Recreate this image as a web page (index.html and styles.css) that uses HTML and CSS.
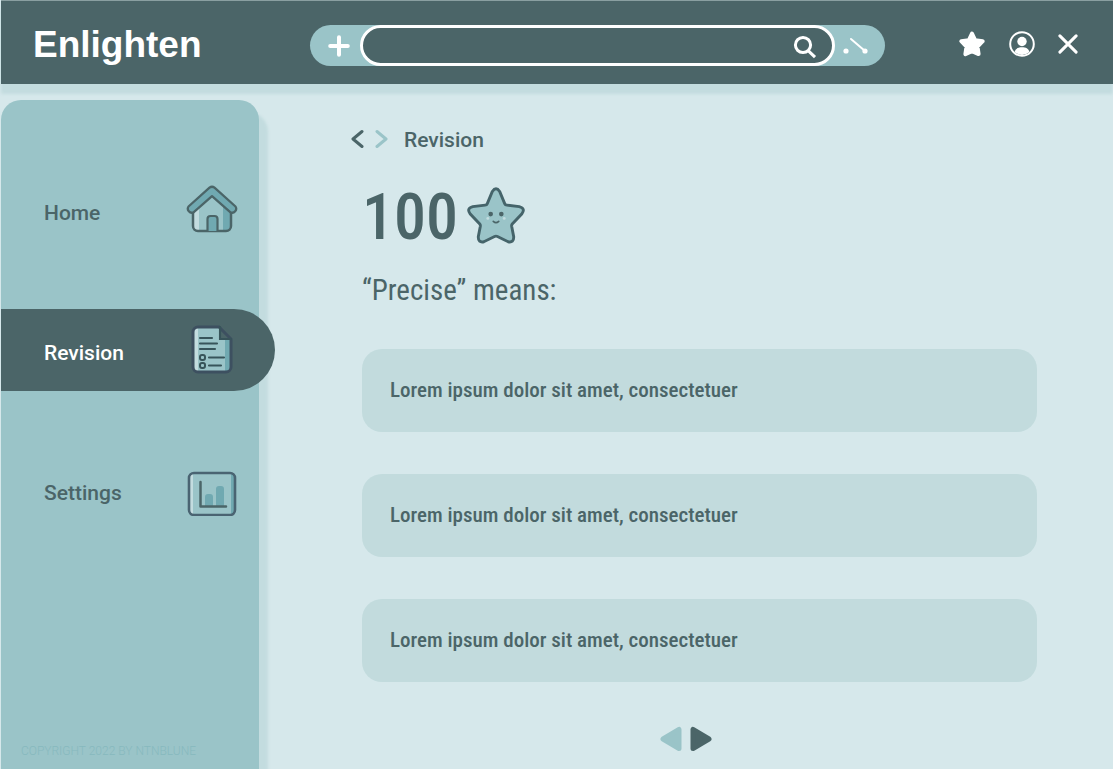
FILE: index.html
```html
<!DOCTYPE html>
<html lang="en">
<head>
<meta charset="utf-8">
<meta name="viewport" content="width=device-width, initial-scale=1">
<title>Enlighten</title>
<link rel="stylesheet" href="styles.css">
</head>
<body>
<header class="topbar">
  <a class="logo" href="#">Enlighten</a>
  <form class="search" role="search">
    <button class="search-side" type="button" aria-label="Add">
      <svg width="22" height="22" viewBox="0 0 22 22"><path d="M11 2.2v17.6M2.2 11h17.6" stroke="#fff" stroke-width="4" stroke-linecap="round"/></svg>
    </button>
    <div class="search-field">
      <input class="search-input" type="search" aria-label="Search">
      <button class="icon-button" type="submit" aria-label="Submit search">
        <svg width="24" height="24" viewBox="0 0 24 24" fill="none" stroke="#fff" stroke-width="3"><circle cx="10" cy="10" r="7.6"/><path d="M15.4 15.8l6.6 6.4"/></svg>
      </button>
    </div>
    <button class="search-side" type="button" aria-label="Tools">
      <svg width="26" height="18" viewBox="0 0 26 18"><circle cx="3" cy="14" r="2.6" fill="#fff"/><circle cx="22" cy="14" r="2.6" fill="#fff"/><path d="M8 2l14 12" stroke="#fff" stroke-width="2" stroke-linecap="round"/></svg>
    </button>
  </form>
  <div class="actions">
    <button class="icon-button" type="button" aria-label="Favourites">
      <svg width="28" height="28" viewBox="0 0 28 28"><path d="M14 3.500l3.200 6.800 7.500.9-5.200 5.300 1.100 7.600L14 21.200l-6.600 2.900 1.100-7.600-5.200-5.300 7.500-.9z" fill="#fff" stroke="#fff" stroke-width="4" stroke-linejoin="round"/></svg>
    </button>
    <button class="icon-button" type="button" aria-label="Account">
      <svg width="26" height="26" viewBox="0 0 26 26"><circle cx="13" cy="13" r="11.800" fill="none" stroke="#fff" stroke-width="2"/><circle cx="13" cy="10.500" r="4.700" fill="#fff"/><path d="M5.600 21c.8-3.400 3.600-4.700 7.400-4.700s6.600 1.300 7.400 4.700A12 12 0 0 1 13 24a12 12 0 0 1-7.400-3z" fill="#fff"/></svg>
    </button>
    <button class="icon-button" type="button" aria-label="Close">
      <svg width="20" height="20" viewBox="0 0 20 20"><path d="M1.900 1.900l16.200 16.200M18.100 1.900L1.900 18.100" stroke="#fff" stroke-width="3" stroke-linecap="round"/></svg>
    </button>
  </div>
</header>

<div class="layout">
  <aside class="sidebar">
    <nav class="menu" aria-label="Main">
      <a class="menu-item" href="#"><span class="menu-label">Home</span>
        <svg width="52" height="52" viewBox="0 0 52 52">
          <path d="M7 22L26 7l19 15v20a5 5 0 0 1-5 5H12a5 5 0 0 1-5-5z" fill="#9ac4c8"/>
          <path d="M7 23l6-5v29h-1a5 5 0 0 1-5-5z" fill="#c3dcdf"/>
          <path d="M37 17l8 6v19a5 5 0 0 1-5 5h-3z" fill="#70a9b1"/>
          <path d="M7 25v17a5 5 0 0 0 5 5h28a5 5 0 0 0 5-5V25" fill="none" stroke="#4b6568" stroke-width="2.500"/>
          <path d="M21.500 47V35a3 3 0 0 1 3-3h4a3 3 0 0 1 3 3v12" fill="#70a9b1" stroke="#4b6568" stroke-width="2.200"/>
          <path d="M23.500 3.700a4 4 0 0 1 5 0L49.500 22.500a4 4 0 0 1-5 5.800L26 12.200 7.500 28.300a4 4 0 0 1-5-5.800z" fill="#70a9b1" stroke="#4b6568" stroke-width="2.300" stroke-linejoin="round"/>
        </svg>
      </a>
      <a class="menu-item menu-item-active" href="#" aria-current="page"><span class="menu-label">Revision</span>
        <svg width="52" height="52" viewBox="0 0 52 52">
          <path d="M12 3h21l12 12v28a5 5 0 0 1-5 5H12a5 5 0 0 1-5-5V8a5 5 0 0 1 5-5z" fill="#9ac4c8"/>
          <path d="M12 3v45a5 5 0 0 1-5-5V8a5 5 0 0 1 5-5z" fill="#c3dcdf"/>
          <path d="M39 14h6v29a5 5 0 0 1-5 5h-1z" fill="#70a9b1"/>
          <path d="M34 3v12h11z" fill="#4b6568"/>
          <path d="M12 3h21l12 12v28a5 5 0 0 1-5 5H12a5 5 0 0 1-5-5V8a5 5 0 0 1 5-5z" fill="none" stroke="#3d5060" stroke-width="3"/>
          <path d="M34 3v12h11M14 14H26M14 19.500H31M14 25H29M23 33.500H38M23 41.500H35" fill="none" stroke="#37545a" stroke-width="2.100" stroke-linecap="round"/>
          <g fill="none" stroke="#37545a" stroke-width="2"><rect x="14" y="31" width="5" height="5" rx="2"/><rect x="14" y="39" width="5" height="5" rx="2"/></g>
        </svg>
      </a>
      <a class="menu-item" href="#"><span class="menu-label">Settings</span>
        <svg width="52" height="52" viewBox="0 0 52 52">
          <rect x="3" y="9" width="46" height="42" rx="5" fill="#9ac4c8"/>
          <path d="M7 9v42a4 4 0 0 1-4-5V14a5 5 0 0 1 4-5z" fill="#c3dcdf"/>
          <path d="M45 9a5 5 0 0 1 4 5v32a5 5 0 0 1-4 5z" fill="#70a9b1"/>
          <rect x="3" y="9" width="46" height="42" rx="5" fill="none" stroke="#4a6472" stroke-width="2.600"/>
          <path d="M19 42V33a3 3 0 0 1 3-3h2a3 3 0 0 1 3 3v9zM30 42V25a3 3 0 0 1 3-3h2a3 3 0 0 1 3 3v17z" fill="#70a9b1"/>
          <path d="M14.500 18v24.500H40" fill="none" stroke="#4b6568" stroke-width="2.500" stroke-linecap="round" stroke-linejoin="round"/>
        </svg>
      </a>
    </nav>
    <p class="copyright">COPYRIGHT 2022 BY NTNBLUNE</p>
  </aside>

  <main class="main">
    <div class="content">
      <div class="crumbs">
        <button class="icon-button" type="button" aria-label="Back">
          <svg width="14" height="20" viewBox="0 0 14 20"><path d="M12 2.500L3 10l9 7.500" fill="none" stroke="#4b6568" stroke-width="3" stroke-linecap="round" stroke-linejoin="round"/></svg>
        </button>
        <button class="icon-button" type="button" aria-label="Forward">
          <svg width="14" height="20" viewBox="0 0 14 20"><path d="M3 2.500L12 10l-9 7.500" fill="none" stroke="#9ac4c8" stroke-width="3" stroke-linecap="round" stroke-linejoin="round"/></svg>
        </button>
        <span class="crumb">Revision</span>
      </div>
      <div class="score">
        <span class="score-value">100</span>
        <svg width="58" height="58" viewBox="0 0 60 60">
          <path id="star" d="M26.200 4.600Q30-1 33.800 4.600L39 17.200Q39.600 18.600 41.200 18.700L54 20.300Q61 22.200 56.600 28L46.800 38.200Q46 39.200 46.200 40.500L48.300 51.500Q48.500 58 42.500 56.600L31.500 51.200Q30 50.500 28.500 51.200L17.500 56.600Q11.500 58 11.700 51.500L13.800 40.500Q14 39.200 13.200 38.200L3.400 28Q-1 22.200 6 20.300L18.800 18.700Q20.400 18.600 21 17.200z" fill="#9ac4c8"/>
          <path d="M32 5l4.500 14q.8 3 4 3.500l10 1.500q3 .5 1 3l-8 8.500q-1.500 2-1 4L44 55q5 0 4-5l-2-10 11-13q1-5-3-6l-14-2-5-13z" fill="#70a9b1"/>
          <path d="M26 9l-4 10q-1 2-4 2.500L7 23q-3 1-1 4l7 8" fill="none" stroke="#c3dcdf" stroke-width="1.500"/>
          <use href="#star" class="star-outline"/>
          <circle cx="24.500" cy="28" r="2.400" fill="#4b6568"/><circle cx="35.500" cy="28" r="2.400" fill="#4b6568"/>
          <circle cx="21.500" cy="32.500" r="1.500" fill="#c3dcdf"/><circle cx="38.500" cy="32.500" r="1.500" fill="#c3dcdf"/>
          <path d="M27.200 35.500q2.800 2.600 5.600 0" fill="none" stroke="#4b6568" stroke-width="1.800" stroke-linecap="round"/>
        </svg>
      </div>
      <h1 class="question">“Precise” means:</h1>
      <div class="answers">
        <button class="answer" type="button">Lorem ipsum dolor sit amet, consectetuer</button>
        <button class="answer" type="button">Lorem ipsum dolor sit amet, consectetuer</button>
        <button class="answer" type="button">Lorem ipsum dolor sit amet, consectetuer</button>
      </div>
    </div>
    <div class="pager">
      <button class="icon-button" type="button" aria-label="Previous question">
        <svg width="22" height="26" viewBox="0 0 22 26"><path d="M19 3.500v19L3 13z" fill="#9ac4c8" stroke="#9ac4c8" stroke-width="5" stroke-linejoin="round"/></svg>
      </button>
      <button class="icon-button" type="button" aria-label="Next question">
        <svg width="22" height="26" viewBox="0 0 22 26"><path d="M3 3.500v19L19 13z" fill="#4b6568" stroke="#4b6568" stroke-width="5" stroke-linejoin="round"/></svg>
      </button>
    </div>
  </main>
</div>
</body>
</html>
```
FILE: styles.css
```css
:root {
  --dark: #4b6568;
  --teal: #9ac4c8;
  --soft: #c3dcdf;
  --pale: #d6e8eb;
  --condensed: "Roboto Condensed", "Liberation Sans Narrow", Roboto, sans-serif;
}

* {
  box-sizing: border-box;
}

body {
  margin: 0;
  min-height: 100vh;
  display: flex;
  flex-direction: column;
  padding-left: 1px;
  background: var(--pale);
  color: var(--dark);
  font-family: Roboto, "Liberation Sans", sans-serif;
}

svg {
  display: block;
}

button {
  border: 0;
  color: inherit;
  font: inherit;
  cursor: pointer;
}

.icon-button {
  padding: 0;
  background: none;
}

.topbar {
  height: 84px;
  display: flex;
  align-items: center;
  border-top: 1px solid #8a9fa1;
  background: var(--dark);
  box-shadow: 0 10px 3px var(--soft);
}

.logo {
  flex: 0 0 309px;
  padding: 4px 0 0 32px;
  color: #fff;
  font-family: "Liberation Sans", sans-serif;
  font-size: 37px;
  font-weight: 700;
  line-height: 44px;
  text-decoration: none;
}

.search {
  flex: 1;
  height: 41px;
  margin-top: 6px;
  display: flex;
  border-radius: 21px;
  background: var(--teal);
}

.search-side {
  flex: 0 0 50px;
  display: flex;
  align-items: center;
  justify-content: flex-end;
  padding: 0 10px 0 0;
  background: none;
}

.search-side:last-child {
  justify-content: flex-start;
  padding: 0 0 0 8px;
}

.search-field {
  flex: 1;
  display: flex;
  align-items: center;
  padding: 2px 15px 0 0;
  border: 3px solid #fff;
  border-radius: 21px;
  background: var(--dark);
}

.search-input {
  flex: 1;
  min-width: 0;
  padding: 0 20px;
  border: 0;
  outline: 0;
  background: none;
  color: #fff;
  font: inherit;
}

.actions {
  flex: 0 0 228px;
  display: flex;
  align-items: center;
  justify-content: flex-end;
  gap: 23px;
  padding: 3px 35px 0 0;
}

.layout {
  flex: 1;
  display: flex;
}

.sidebar {
  flex: 0 0 258px;
  margin-top: 16px;
  padding-top: 69px;
  display: flex;
  flex-direction: column;
  justify-content: space-between;
  border-radius: 20px 20px 0 0;
  background: var(--teal);
  box-shadow: 9px 12px 3px var(--soft);
}

.menu {
  display: flex;
  flex-direction: column;
  gap: 58px;
}

.menu-item {
  height: 82px;
  display: flex;
  align-items: center;
  justify-content: space-between;
  padding: 0 21px 0 43px;
  color: var(--dark);
  font-size: 21px;
  font-weight: 500;
  line-height: 26px;
  text-decoration: none;
}

.menu-item-active {
  margin-right: -16px;
  padding-right: 37px;
  border-radius: 0 41px 41px 0;
  background: var(--dark);
  color: #fff;
}

.menu-label {
  padding-top: 6px;
}

.copyright {
  margin: 0;
  padding: 0 20px 10px;
  color: #87b9be;
  font-size: 12px;
  font-weight: 300;
  line-height: 16px;
}

.main {
  flex: 1;
  display: flex;
  flex-direction: column;
  padding-top: 40px;
}

.content {
  padding: 0 76px 0 103px;
}

.crumbs {
  display: flex;
  align-items: center;
  gap: 10px;
  margin-left: -12px;
  height: 30px;
}

.crumb {
  padding: 2px 0 0 6px;
  font-size: 21px;
  font-weight: 500;
  line-height: 26px;
}

.score {
  display: flex;
  align-items: center;
  gap: 9px;
  height: 64px;
  margin-top: 30px;
}

.score-value {
  padding-top: 4px;
  font-family: var(--condensed);
  font-size: 64px;
  font-weight: 500;
  line-height: 60px;
}

.star-outline {
  fill: none;
  stroke: #45646a;
  stroke-width: 3px;
}

.question {
  margin: 24px 0 0;
  font-family: var(--condensed);
  font-size: 29px;
  font-weight: 400;
  line-height: 36px;
}

.answers {
  display: flex;
  flex-direction: column;
  gap: 42px;
  margin-top: 41px;
}

.answer {
  min-height: 83px;
  padding: 0 28px 2px;
  border-radius: 20px;
  background: #c2dbdd;
  font-family: var(--condensed);
  font-size: 21px;
  font-weight: 500;
  line-height: 28px;
  text-align: left;
}

.pager {
  display: flex;
  justify-content: center;
  gap: 8px;
  margin-top: 44px;
}
```
